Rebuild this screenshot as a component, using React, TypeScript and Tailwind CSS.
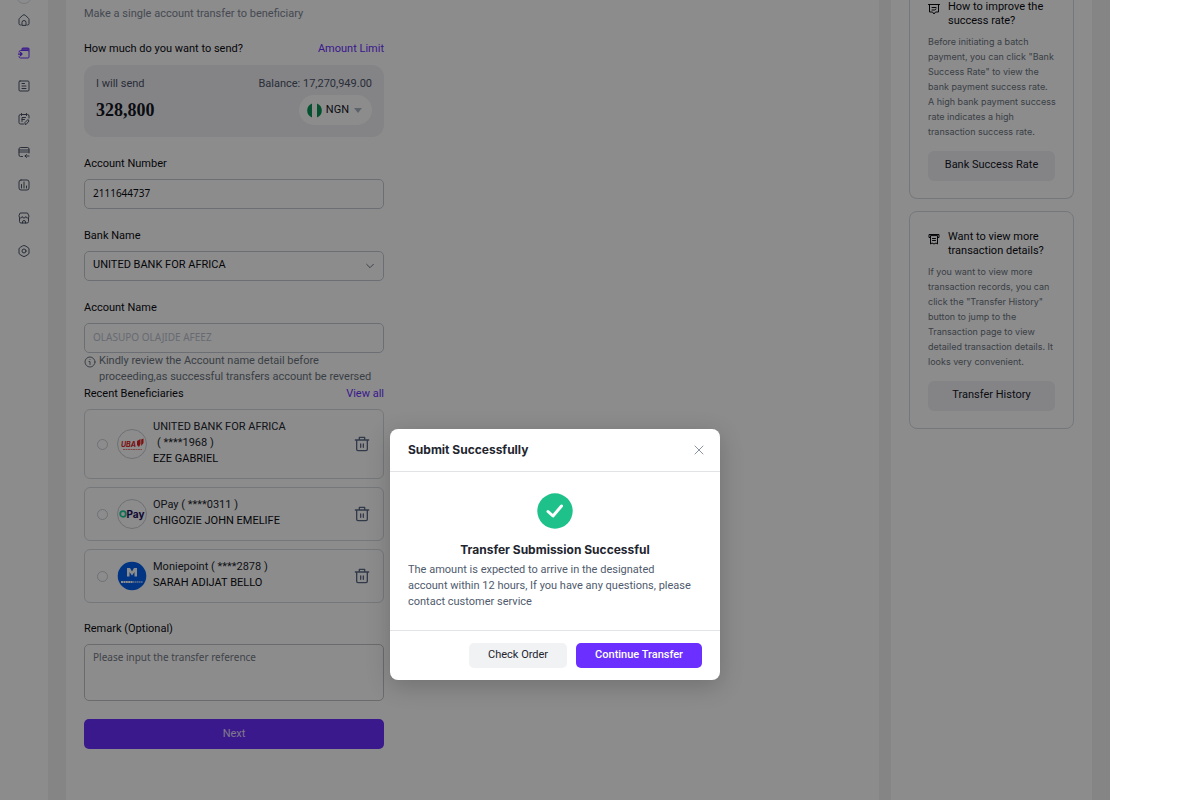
import type { ReactNode } from "react";

const Icon = ({
  children,
  className = "size-3",
}: {
  children: ReactNode;
  className?: string;
}) => (
  <svg
    viewBox="0 0 24 24"
    fill="none"
    stroke="currentColor"
    strokeWidth="2"
    strokeLinecap="round"
    strokeLinejoin="round"
    aria-hidden="true"
    className={className}
  >
    {children}
  </svg>
);

const navItems = [
  {
    name: "Home",
    icon: (
      <>
        <path d="M6 22H5q-3 0-3-3v-8q0-1.500 1-2.500l6.500-6q2.500-2 5 0l6.500 6q1 1 1 2.500v8q0 3-3 3h-1" />
        <path d="M8 22v-5q0-4 4-4t4 4v5z" />
      </>
    ),
  },
  {
    name: "Transfer",
    icon: (
      <>
        <path d="M2 10q0-3 3-3h15q2 0 2 2v11q0 2-2 2H5q-3 0-3-3" />
        <path d="M8 6V4q0-2 2-2h10q2 0 2 2v4" />
        <path d="M9 4h12" strokeWidth="3" />
        <path d="M1 14h7M5 11l3 3-3 3" strokeWidth="2.500" />
      </>
    ),
  },
  {
    name: "Orders",
    icon: (
      <>
        <rect x="2" y="2" width="20" height="20" rx="2" />
        <path d="M8 7h5M8 12h8M8 17h8" />
      </>
    ),
  },
  {
    name: "Invoices",
    icon: (
      <>
        <path d="M22 10V6q0-3-3-3H5Q2 3 2 6v13q0 3 3 3h6M7 1v4M17 1v4" />
        <path d="M8 17V9h7M8 13h5M14 22v-3l6-6 2 3-5 6z" />
      </>
    ),
  },
  {
    name: "Cards",
    icon: (
      <>
        <path d="M22 14V6q0-3-3-3H5Q2 3 2 6v12q0 3 3 3h4M2 8h20M2 12h20" />
        <path d="M14 20h8M17 17l-3 3 3 3" />
      </>
    ),
  },
  {
    name: "Reports",
    icon: (
      <>
        <rect x="2" y="2" width="20" height="20" rx="4" />
        <path d="M7 18v-7M12 18V6M17 18v-4" />
      </>
    ),
  },
  {
    name: "Store",
    icon: (
      <>
        <path d="M5 2h14l3 6q0 4-3 4t-3.500-3q-.5 3-3.500 3T8.500 9Q8 12 5 12T2 8z" />
        <path d="M3 12v7q0 3 3 3h12q3 0 3-3v-7M9 22v-2q0-3 3-3t3 3v2" />
      </>
    ),
  },
  {
    name: "Settings",
    icon: (
      <>
        <path d="M10 1.500q2-1 4 0l6 3.500q2 1 2 3v8q0 2-2 3l-6 3.500q-2 1-4 0L4 19q-2-1-2-3V8q0-2 2-3z" />
        <circle cx="12" cy="12" r="4" />
      </>
    ),
  },
];

const UbaLogo = () => (
  <svg viewBox="0 0 30 30" className="size-[30px] shrink-0" role="img" aria-label="UBA">
    <circle cx="15" cy="15" r="14.500" fill="#fff" stroke="#c9ccd2" />
    <text x="4" y="18" fill="#e02020" fontSize="7" fontWeight="700" fontStyle="italic" fontFamily="Inter, sans-serif">
      UBA
    </text>
    <path d="M20 12l3.500-2v5L22 18l-2-2zM24.200 10.500l2.300-1v4.500l-2.300 3z" fill="#e02020" />
    <path d="M6 20.500h19" stroke="#f08080" strokeWidth="1" strokeDasharray="2 .5" />
  </svg>
);

const OpayLogo = () => (
  <svg viewBox="0 0 30 30" className="size-[30px] shrink-0" role="img" aria-label="OPay">
    <circle cx="15" cy="15" r="14.500" fill="#fff" stroke="#c9ccd2" />
    <circle cx="6" cy="15" r="2.800" fill="none" stroke="#1dcf9f" strokeWidth="1.800" />
    <text x="9.500" y="18.500" fill="#210f60" fontSize="10" fontWeight="700" fontFamily="Inter, sans-serif">
      Pay
    </text>
  </svg>
);

const MoniepointLogo = () => (
  <svg viewBox="0 0 30 30" className="size-[30px] shrink-0" role="img" aria-label="Moniepoint">
    <circle cx="15" cy="15" r="14.300" fill="#0361f0" />
    <path d="M10 15.500V7h3l2 3.500L17 7h3v8.500h-2.500V11L15 14.500 12.500 11v4.500z" fill="#fff" />
    <path d="M4 21h12" stroke="#fff" strokeWidth="2" strokeDasharray="2 .4" />
    <path d="M16 21h10" stroke="#7db0ff" strokeWidth="2" strokeDasharray="1.500 .4" />
  </svg>
);

const beneficiaries = [
  { bank: "UNITED BANK FOR AFRICA", wrap: true, digits: "1968", name: "EZE GABRIEL", logo: <UbaLogo /> },
  { bank: "OPay", wrap: false, digits: "0311", name: "CHIGOZIE JOHN EMELIFE", logo: <OpayLogo /> },
  { bank: "Moniepoint", wrap: false, digits: "2878", name: "SARAH ADIJAT BELLO", logo: <MoniepointLogo /> },
];

const Sidebar = () => (
  <nav className="w-12 shrink-0 bg-white">
    <div className="-mt-3 ml-4 size-4 rounded-full border border-[#dcdfe4]" />
    <ul className="mt-[10px] flex flex-col items-center gap-[21px] text-[#4b5568]">
      {navItems.map((item) => (
        <li key={item.name} className={item.name === "Transfer" ? "text-[#6b2fff]" : ""}>
          <a href="#" aria-label={item.name} className="block">
            <Icon>{item.icon}</Icon>
          </a>
        </li>
      ))}
    </ul>
  </nav>
);

const Beneficiaries = () => (
  <section>
    <div className="mt-px flex justify-between">
      <h2>Recent Beneficiaries</h2>
      <a href="#" className="text-[#6b2fff]">View all</a>
    </div>
    <ul className="mt-[7px] flex flex-col gap-2">
      {beneficiaries.map((b) => (
        <li key={b.name} className="flex items-center rounded-md border border-[#d6dae0] pr-[13px] pl-3">
          <input
            type="radio"
            name="beneficiary"
            aria-label={b.name}
            className="size-[11px] shrink-0 appearance-none rounded-full border border-[#c9ced6]"
          />
          <span className="ml-[9px] flex">{b.logo}</span>
          <div className="ml-[6px] grow pt-[9px] pb-[11px] text-[#22252e]">
            <p>
              {b.bank}
              {b.wrap ? <br /> : " "}
              <span className={b.wrap ? "ml-1" : ""}>( ****{b.digits} )</span>
            </p>
            <p className="text-[#0b0c12]">{b.name}</p>
          </div>
          <button type="button" aria-label={"Remove " + b.name} className="text-[#5b6b86]">
            <Icon className="size-4">
              <path d="M2 6h20M8 6V2h8v4M4 6v14q0 2 2 2h12q2 0 2-2V6M10 12v5M14 12v5" />
            </Icon>
          </button>
        </li>
      ))}
    </ul>
  </section>
);

const TransferForm = () => (
  <main className="min-w-0 grow bg-white px-[18px] pt-[6px] pb-12">
    <form className="w-[300px]">
      <p className="text-[#7d8696]">Make a single account transfer to beneficiary</p>
      <div className="mt-[19px] flex justify-between">
        <label htmlFor="amount">How much do you want to send?</label>
        <a href="#" className="text-[#6b2fff]">Amount Limit</a>
      </div>
      <div className="mt-2 rounded-xl bg-[#f0f0f5] px-3 pt-[11px] pb-3 text-[#4b5568]">
        <div className="flex justify-between">
          <span>I will send</span>
          <span>Balance: 17,270,949.00</span>
        </div>
        <div className="mt-[3px] flex items-center justify-between">
          <input
            id="amount"
            defaultValue="328,800"
            className="w-32 bg-transparent font-['Liberation_Serif',serif] text-lg font-bold text-[#14161f] outline-none"
          />
          <button type="button" className="flex h-[30px] items-center gap-1 rounded-full bg-white pr-[10px] pl-2 text-[#14161f]">
            <svg viewBox="0 0 15 15" className="size-[15px]" aria-hidden="true">
              <path d="M5 .5A7.500 7.500 0 0 0 5 14.500zM10 .5a7.500 7.500 0 0 1 0 14z" fill="#079455" />
            </svg>
            NGN
            <svg viewBox="0 0 8 5" className="ml-px h-[5px] w-2" aria-hidden="true">
              <path d="M0 0h8L4 5z" fill="#a9b4c4" />
            </svg>
          </button>
        </div>
      </div>

      <label htmlFor="account" className="mt-[19px] block">Account Number</label>
      <input
        id="account"
        defaultValue="2111644737"
        className="mt-[7px] h-[30px] w-full rounded-[5px] border border-[#c4cad4] px-2 pb-[2px] font-['Noto_Sans',sans-serif] text-[10px]"
      />

      <label htmlFor="bank" className="mt-[19px] block">Bank Name</label>
      <div className="mt-[7px] grid items-center">
        <select
          id="bank"
          className="col-start-1 row-start-1 h-[30px] w-full appearance-none rounded-[5px] border border-[#c4cad4] px-2 pb-[3px]"
        >
          <option>UNITED BANK FOR AFRICA</option>
        </select>
        <Icon className="pointer-events-none col-start-1 row-start-1 mr-[10px] size-2 justify-self-end text-[#6b7480]">
          <path d="M2 7l10 10L22 7" strokeWidth="3" />
        </Icon>
      </div>

      <label htmlFor="holder" className="mt-[19px] block">Account Name</label>
      <input
        id="holder"
        disabled
        defaultValue="OLASUPO OLAJIDE AFEEZ"
        className="mt-[7px] h-[30px] w-full rounded-[5px] border border-[#c4cad4] px-2 pb-[3px] font-['Noto_Sans',sans-serif] text-[10px] text-[#bcc3ce]"
      />
      <p className="flex gap-[3px] text-[#6b7480]">
        <Icon className="mt-[3px] size-3 shrink-0">
          <circle cx="12" cy="12" r="10" />
          <path d="M10 11h2v6M12 7v0" />
        </Icon>
        <span>Kindly review the Account name detail before proceeding,as successful transfers account be reversed</span>
      </p>

      <Beneficiaries />

      <label htmlFor="remark" className="mt-[18px] block">Remark (Optional)</label>
      <textarea
        id="remark"
        placeholder="Please input the transfer reference"
        className="mt-[7px] block h-[57px] w-full resize-none rounded-[5px] border border-[#c4c4c8] px-2 py-1 font-['Noto_Sans',sans-serif] text-[10px] placeholder:text-[#757b88]"
      />
      <button type="button" className="mt-[18px] h-[30px] w-full rounded-[5px] bg-[#6b2fff] pb-px text-[#e5dcff]">
        Next
      </button>
    </form>
  </main>
);

const HelpCard = ({
  title,
  text,
  action,
  icon,
  className,
}: {
  title: string;
  text: string;
  action: string;
  icon: ReactNode;
  className: string;
}) => (
  <section className={"border-[#d6dae0] px-[18px] pb-[17px] " + className}>
    <h2 className="flex gap-2 text-[11px] leading-[14px]">
      <Icon className="mt-[3px] size-3 shrink-0">{icon}</Icon>
      {title}
    </h2>
    <p className="mt-[6px] -mr-1 font-['Inter',sans-serif] text-[9px] leading-[15px] whitespace-pre-line text-[#6b7480]">
      {text}
    </p>
    <button type="button" className="mt-3 h-[30px] w-full rounded-md bg-[#f0f0f5] pb-[2px] text-[#14161f]">
      {action}
    </button>
  </section>
);

const HelpPanel = () => (
  <aside className="w-[201px] shrink-0 bg-white px-[18px]">
    <HelpCard
      title="How to improve the success rate?"
      text={
        'Before initiating a batch payment, you can click "Bank Success Rate" to view the bank payment success rate.\nA high bank payment success rate indicates a high transaction success rate.'
      }
      action="Bank Success Rate"
      className="rounded-b-lg border-x border-b"
      icon={<path d="M1 3h22M3 3v15h6l3 4 3-4h6V3M8 9h8M8 14h5l3-2" />}
    />
    <HelpCard
      title="Want to view more transaction details?"
      text={
        'If you want to view more transaction records, you can click the "Transfer History" button to jump to the Transaction page to view detailed transaction details. It looks very convenient.'
      }
      action="Transfer History"
      className="mt-3 rounded-lg border pt-[18px]"
      icon={<path d="M5 9H2V3h20v6h-3M5 6v16l3-2 4 2 4-2 3 2V6zM9 11h6M9 15h6" />}
    />
  </aside>
);

const SuccessDialog = () => (
  <div
    role="dialog"
    aria-labelledby="dialog-title"
    className="w-[330px] rounded-lg bg-white text-[#4f5b6d] shadow-[0_6px_24px_rgba(0,0,0,0.2)]"
  >
    <header className="flex h-[43px] items-center justify-between border-b border-[#e2e3e6] pr-[15px] pl-[18px]">
      <h2 id="dialog-title" className="font-['Inter',sans-serif] text-xs font-bold text-[#22252e]">
        Submit Successfully
      </h2>
      <button type="button" aria-label="Close" className="text-[#8b93a1]">
        <Icon className="size-3">
          <path d="M4 4l16 16M20 4L4 20" />
        </Icon>
      </button>
    </header>
    <div className="px-[18px] pt-[21px] pb-5">
      <svg viewBox="0 0 36 36" className="mx-auto size-9" aria-hidden="true">
        <circle cx="18" cy="18" r="17.700" fill="#1fc18a" />
        <path d="M11 18.500l5 4.500 8.500-10" fill="none" stroke="#fff" strokeWidth="3" strokeLinecap="round" strokeLinejoin="round" />
      </svg>
      <h3 className="mt-[13px] text-center font-['Inter',sans-serif] text-xs font-bold text-[#22252e]">
        Transfer Submission Successful
      </h3>
      <p className="mt-1 pr-2">
        The amount is expected to arrive in the designated account within 12 hours, If you have any questions, please
        contact customer service
      </p>
    </div>
    <footer className="flex justify-end gap-[9px] border-t border-[#e2e3e6] px-[18px] py-3">
      <button type="button" className="h-[25px] rounded-[5px] bg-[#f1f2f4] px-[19px] pb-[2px] text-[#22252e]">
        Check Order
      </button>
      <button type="button" className="h-[25px] rounded-[5px] bg-[#6b2fff] px-[19px] pb-[2px] font-medium text-white">
        Continue Transfer
      </button>
    </footer>
  </div>
);

const App = () => {
  return (
    <div className="bg-white pr-[90px] font-['Roboto',sans-serif] text-[11px] leading-4 text-[#0b0c12]">
      <div className="relative flex min-h-screen bg-[#f3f3f5] pr-[18px]">
        <Sidebar />
        <div className="w-[18px] shrink-0" />
        <TransferForm />
        <div className="w-3 shrink-0" />
        <HelpPanel />
        <div className="absolute inset-0 flex items-start justify-center bg-black/45 pt-[429px]">
          <SuccessDialog />
        </div>
      </div>
    </div>
  );
};

export default App;
